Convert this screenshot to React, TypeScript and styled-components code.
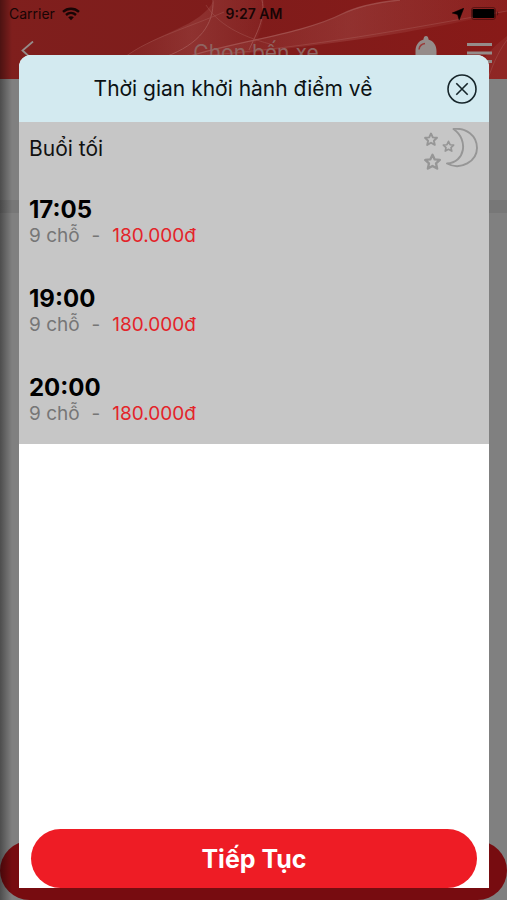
import React from "react";
import styled, { createGlobalStyle } from "styled-components";

const GlobalStyle = createGlobalStyle`
  *, *::before, *::after { box-sizing: border-box; }
  html, body { margin: 0; height: 100%; }
  #root { height: 100%; }
  body { font-family: Inter, "Liberation Sans", sans-serif; color: #000; background: #808080; }
  button { font: inherit; color: inherit; border: 0; padding: 0; background: none; cursor: pointer; }
  h1, h2, p, ul { margin: 0; padding: 0; font-weight: 400; }
  ul { list-style: none; }
  svg { display: block; }
`;

const Screen = styled.div`
  position: relative;
  min-height: 100vh;
  display: flex;
  flex-direction: column;
  overflow: hidden;
  background: #808080;
`;

const TopArea = styled.header`
  position: relative;
  height: 79px;
  flex: none;
  display: flex;
  flex-direction: column;
  background: linear-gradient(90deg, #7f1f1d 0%, #7f1c1b 45%, #881a18 100%);
`;

const Waves = styled.svg`
  position: absolute;
  inset: 0;
  width: 100%;
  height: 100%;
`;

const StatusBar = styled.div`
  position: relative;
  height: 27px;
  padding: 0 8px 0 9px;
  display: grid;
  grid-template-columns: 1fr auto 1fr;
  align-items: center;
  font-size: 14px;
  color: #180505;
`;

const StatusGroup = styled.div<{ $end?: boolean }>`
  display: flex;
  align-items: center;
  gap: 7px;
  justify-content: ${(p) => (p.$end ? "flex-end" : "flex-start")};
`;

const Clock = styled.span`
  font-size: 14px;
  font-weight: 600;
`;

const NavBar = styled.nav`
  position: relative;
  flex: 1;
  padding: 0 15px 0 20px;
  display: grid;
  grid-template-columns: 1fr auto 1fr;
  align-items: center;
  color: #958c8a;
`;

const NavTitle = styled.span`
  font-size: 21px;
  line-height: 24px;
  color: #8f6461;
`;

const NavActions = styled.div`
  display: flex;
  align-items: center;
  justify-content: flex-end;
  gap: 30px;
`;

const Divider = styled.div`
  margin-top: 121px;
  height: 13px;
  background: #777;
`;

const PageButton = styled.button`
  margin-top: auto;
  height: 59px;
  border-radius: 30px;
  background: #770c10;
`;

const EdgeShade = styled.div`
  position: absolute;
  inset: 0 auto 0 0;
  width: 12px;
  background: linear-gradient(90deg, rgba(0, 0, 0, 0.4), rgba(0, 0, 0, 0));
`;

const Overlay = styled.div`
  position: absolute;
  inset: 0;
  padding: 55px 18px 12px 19px;
  display: flex;
`;

const Dialog = styled.section`
  flex: 1;
  display: flex;
  flex-direction: column;
  overflow: hidden;
  border-radius: 12px 12px 0 0;
  background: #fff;
`;

const DialogHeader = styled.div`
  height: 67px;
  padding-right: 12px;
  display: grid;
  grid-template-columns: 1fr 30px;
  align-items: center;
  background: #d3eaf0;
`;

const DialogTitle = styled.h1`
  text-align: center;
  font-size: 21px;
  line-height: 28px;
  color: #0c1214;
`;

const Period = styled.div`
  padding: 0 10px 19px;
  background: #c6c6c6;
`;

const PeriodHeader = styled.div`
  height: 54px;
  display: flex;
  align-items: center;
  justify-content: space-between;
`;

const PeriodName = styled.h2`
  font-size: 21px;
  line-height: 28px;
  color: #111;
`;

const TripList = styled.ul`
  padding-top: 19px;
  display: flex;
  flex-direction: column;
  gap: 37px;
`;

const Trip = styled.button`
  display: block;
  width: 100%;
  text-align: left;
`;

const TripTime = styled.strong`
  display: block;
  font-size: 24px;
  line-height: 30px;
  font-weight: 700;
`;

const TripInfo = styled.span`
  display: flex;
  gap: 12px;
  font-size: 19px;
  line-height: 22px;
  color: #767676;
`;

const Price = styled.span`
  color: #e3242a;
`;

const DialogFooter = styled.div`
  margin-top: auto;
  padding: 0 12px;
`;

const ContinueButton = styled.button`
  display: block;
  width: 100%;
  height: 59px;
  border-radius: 30px;
  background: #ee1c25;
  color: #fff;
  font-size: 25px;
  font-weight: 700;
`;

const trips = [
  { time: "17:05", seats: "9 chỗ", price: "180.000đ" },
  { time: "19:00", seats: "9 chỗ", price: "180.000đ" },
  { time: "20:00", seats: "9 chỗ", price: "180.000đ" },
];

const starOutline = "M0-6 1.8-2.1 6-1.7 2.9 1.2 3.8 5.4 0 3.2-3.8 5.4-2.9 1.2-6-1.7-1.8-2.1Z";

function HeaderWaves() {
  return (
    <Waves viewBox="0 0 507 79" preserveAspectRatio="none" aria-hidden="true">
      <defs>
        <linearGradient id="veil" x1="0" y1="0" x2="1" y2="0">
          <stop offset="0" stopColor="#b0605c" stopOpacity=".05" />
          <stop offset=".5" stopColor="#b0605c" stopOpacity=".32" />
          <stop offset="1" stopColor="#b0605c" stopOpacity=".08" />
        </linearGradient>
      </defs>
      <path d="M120 60C160 30 200 28 214 0H264C266 22 258 40 246 60Z" fill="url(#veil)" />
      <path d="M190 58C240 38 305 34 345 13 362 4 385 2 402 0H507V11C440 28 360 42 200 58Z" fill="url(#veil)" />
      <path d="M470 79C480 60 495 45 507 36V79Z" fill="#b0605c" opacity=".18" />
      <g fill="none" stroke="#b5716d" opacity=".5">
        <path d="M125 57C150 38 190 27 224 12" opacity=".6" />
        <path d="M213 0C214 24 200 44 165 57" />
        <path d="M206 5C218 24 240 36 270 44" opacity=".6" />
        <path d="M262 0C266 18 256 34 249 50" />
        <path d="M190 56C235 42 305 33 342 14 360 5 380 2 400 0" strokeWidth="1.3" />
        <path d="M200 56C320 46 400 30 507 11" opacity=".6" />
        <path d="M488 79C494 60 501 48 507 40" opacity=".6" />
      </g>
    </Waves>
  );
}

function WifiIcon() {
  return (
    <svg width="18" height="14" viewBox="0 0 18 14" aria-hidden="true">
      <g fill="none" stroke="currentColor" strokeWidth="2.4">
        <path d="M1 4.8C5.6.7 12.4.7 17 4.8" />
        <path d="M4 8C6.9 5.4 11.1 5.4 14 8" />
      </g>
      <path d="M6.2 10.3C7.8 8.9 10.2 8.9 11.8 10.3L9 13.2Z" fill="currentColor" />
    </svg>
  );
}

function LocationIcon() {
  return (
    <svg width="12" height="12" viewBox="0 0 12 12" aria-hidden="true">
      <path d="M11.7.3 7.2 11.8 5.6 6.4.3 5Z" fill="#000" stroke="#000" strokeWidth=".6" strokeLinejoin="round" />
    </svg>
  );
}

function BatteryIcon() {
  return (
    <svg width="28" height="13" viewBox="0 0 28 13" aria-hidden="true">
      <rect x=".5" y=".5" width="24" height="12" rx="2.5" fill="none" stroke="#3a0c0b" opacity=".6" />
      <rect x="1.5" y="2" width="22" height="9" rx="1" fill="#000" />
      <path d="M26 4.3C27.8 5.2 27.8 7.8 26 8.7Z" fill="#3a0c0b" opacity=".6" />
    </svg>
  );
}

function BackIcon() {
  return (
    <svg width="14" height="20" viewBox="0 0 14 20" aria-hidden="true">
      <path d="M13 .5 2.5 9.5 13 19" fill="none" stroke="currentColor" strokeWidth="1.8" />
    </svg>
  );
}

function BellIcon() {
  return (
    <svg width="22" height="34" viewBox="0 0 22 34" aria-hidden="true">
      <path d="M11 0C12.6 0 13.6 1.6 13.5 3.6 18.5 5 21.5 9.5 21.5 15V25L22 28H0L.5 25V15C.5 9.5 3.5 5 8.5 3.6 8.4 1.6 9.4 0 11 0Z" fill="currentColor" />
      <path d="M4 13.5C4.4 10 6.5 8 10 7.5" fill="none" stroke="#9a3a38" strokeWidth="1.5" />
      <path d="M8 29H14C14 33 8 33 8 29Z" fill="currentColor" />
    </svg>
  );
}

function MenuIcon() {
  return (
    <svg width="25" height="20" viewBox="0 0 25 20" aria-hidden="true">
      <path d="M0 1.5H25M0 10H25M0 18.5H25" stroke="currentColor" strokeWidth="3" />
    </svg>
  );
}

function CloseIcon() {
  return (
    <svg width="30" height="30" viewBox="0 0 30 30" aria-hidden="true">
      <g fill="none" stroke="#17262b" strokeWidth="1.6">
        <circle cx="15" cy="15" r="14" />
        <path d="M9.3 9.3 20.7 20.7M20.7 9.3 9.3 20.7" />
      </g>
    </svg>
  );
}

function NightIcon() {
  return (
    <svg width="56" height="42" viewBox="0 0 56 42" aria-hidden="true">
      <g fill="none" stroke="#969696" strokeWidth="1.9" strokeLinejoin="round">
        <path d="M30.5 1C43-.5 54 7.5 54 20 54 33 38 43 24 35.5 42 34.5 46 12 30.5 1Z" />
        <path d={starOutline} transform="translate(8 11.5)" />
        <path d={starOutline} transform="translate(25.5 18.5) scale(.86)" />
        <path d={starOutline} transform="translate(9.5 34) scale(1.22)" />
      </g>
    </svg>
  );
}

export default function App() {
  return (
    <Screen>
      <GlobalStyle />
      <TopArea>
        <HeaderWaves />
        <StatusBar>
          <StatusGroup>
            <span>Carrier</span>
            <WifiIcon />
          </StatusGroup>
          <Clock>9:27 AM</Clock>
          <StatusGroup $end>
            <LocationIcon />
            <BatteryIcon />
          </StatusGroup>
        </StatusBar>
        <NavBar>
          <div>
            <button type="button" aria-label="Quay lại"><BackIcon /></button>
          </div>
          <NavTitle>Chọn bến xe</NavTitle>
          <NavActions>
            <button type="button" aria-label="Thông báo"><BellIcon /></button>
            <button type="button" aria-label="Menu"><MenuIcon /></button>
          </NavActions>
        </NavBar>
      </TopArea>
      <Divider />
      <PageButton type="button" aria-label="Tiếp Tục" />
      <EdgeShade />
      <Overlay>
        <Dialog role="dialog" aria-modal="true" aria-labelledby="dialog-title">
          <DialogHeader>
            <DialogTitle id="dialog-title">Thời gian khởi hành điểm về</DialogTitle>
            <button type="button" aria-label="Đóng"><CloseIcon /></button>
          </DialogHeader>
          <Period>
            <PeriodHeader>
              <PeriodName>Buổi tối</PeriodName>
              <NightIcon />
            </PeriodHeader>
            <TripList>
              {trips.map((trip) => (
                <li key={trip.time}>
                  <Trip type="button">
                    <TripTime>{trip.time}</TripTime>
                    <TripInfo>
                      <span>{trip.seats}</span>
                      <span>-</span>
                      <Price>{trip.price}</Price>
                    </TripInfo>
                  </Trip>
                </li>
              ))}
            </TripList>
          </Period>
          <DialogFooter>
            <ContinueButton type="button">Tiếp Tục</ContinueButton>
          </DialogFooter>
        </Dialog>
      </Overlay>
    </Screen>
  );
}
